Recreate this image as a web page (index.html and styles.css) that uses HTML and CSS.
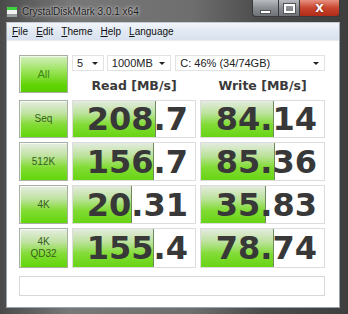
FILE: index.html
```html
<!DOCTYPE html>
<html lang="en">
<head>
  <meta charset="UTF-8">
  <title>CrystalDiskMark 3.0.1 x64</title>
  <link rel="stylesheet" href="styles.css">
</head>
<body>
  <div class="window">
    <div class="titlebar">
      <svg class="app-icon" width="14" height="14" viewBox="0 0 14 14">
        <rect x="1" y="1" width="12" height="4" fill="#3fd23f"/>
        <rect x="1" y="5" width="12" height="4" fill="#f2f2f2"/>
        <rect x="1" y="9" width="12" height="4" fill="#9aa0a0"/>
        <rect x="1.5" y="1.5" width="11" height="11" fill="none" stroke="#555" stroke-width="1"/>
      </svg>
      <span class="title">CrystalDiskMark 3.0.1 x64</span>
      <div class="controls">
        <div class="ctl ctl-min"><span class="min-glyph"></span></div>
        <div class="ctl ctl-max"><span class="max-glyph"></span></div>
        <div class="ctl ctl-close">X</div>
      </div>
    </div>

    <div class="frame">
      <div class="menubar">
        <span class="menu-item"><u>F</u>ile</span>
        <span class="menu-item"><u>E</u>dit</span>
        <span class="menu-item"><u>T</u>heme</span>
        <span class="menu-item"><u>H</u>elp</span>
        <span class="menu-item"><u>L</u>anguage</span>
      </div>

      <div class="client">
        <div class="grid">
          <div class="btn btn-all">All</div>

          <div class="combos">
            <div class="combo combo-count">5<span class="arrow"></span></div>
            <div class="combo combo-size">1000MB<span class="arrow"></span></div>
            <div class="combo combo-drive">C: 46% (34/74GB)<span class="arrow"></span></div>
          </div>

          <div class="head">Read [MB/s]</div>
          <div class="head">Write [MB/s]</div>

          <div class="btn btn-row">Seq</div>
          <div class="cell"><div class="bar" style="width: 82px"></div><span class="val">208.7</span></div>
          <div class="cell"><div class="bar" style="width: 72px"></div><span class="val">84.14</span></div>

          <div class="btn btn-row">512K</div>
          <div class="cell"><div class="bar" style="width: 80px"></div><span class="val">156.7</span></div>
          <div class="cell"><div class="bar" style="width: 73px"></div><span class="val">85.36</span></div>

          <div class="btn btn-row">4K</div>
          <div class="cell"><div class="bar" style="width: 58px"></div><span class="val">20.31</span></div>
          <div class="cell"><div class="bar" style="width: 64px"></div><span class="val">35.83</span></div>

          <div class="btn btn-row btn-two">4K<br>QD32</div>
          <div class="cell"><div class="bar" style="width: 80px"></div><span class="val">155.4</span></div>
          <div class="cell"><div class="bar" style="width: 72px"></div><span class="val">78.74</span></div>

          <div class="comment"></div>
        </div>
      </div>
    </div>
  </div>
</body>
</html>
```

FILE: styles.css
```css
body {
  margin: 0;
  width: 348px;
  height: 314px;
  overflow: hidden;
  background: #3a3a3a;
}

.window {
  width: 348px;
  height: 314px;
  display: flex;
  flex-direction: column;
  background: linear-gradient(90deg, #4a4a4a 0%, #787878 20%, #6e6e6e 55%, #4c4c4c 75%, #3e3e3e 100%);
  box-sizing: border-box;
}

/* title bar */
.titlebar {
  height: 22px;
  display: flex;
  align-items: center;
  padding-left: 5px;
  position: relative;
}

.app-icon {
  display: block;
  margin-top: 1px;
}

.title {
  margin-left: 3px;
  font-family: "Liberation Sans", Arial, sans-serif;
  font-size: 10px;
  color: #1a1a1a;
  text-shadow: 0 0 4px rgba(230, 230, 230, 0.9), 0 0 2px rgba(230, 230, 230, 0.8);
}

.controls {
  position: absolute;
  top: 0;
  right: 8px;
  display: flex;
  height: 17px;
}

.ctl {
  height: 16px;
  border: 1px solid #3a3a3a;
  border-top: none;
  display: flex;
  align-items: center;
  justify-content: center;
  box-sizing: content-box;
}

.ctl-min {
  width: 25px;
  border-radius: 0 0 0 4px;
  background: linear-gradient(#b8bcc0, #8a8e92 50%, #6e7276);
  border-right: none;
}

.ctl-max {
  width: 20px;
  background: linear-gradient(#b8bcc0, #8a8e92 50%, #6e7276);
}

.ctl-close {
  width: 39px;
  border-left: none;
  border-radius: 0 0 4px 0;
  background: linear-gradient(#e89080, #c8442e 50%, #b02c18);
  font-family: "DejaVu Sans", sans-serif;
  font-weight: bold;
  font-size: 11px;
  color: #fff;
  text-shadow: 0 0 2px #6a1a0a;
}

.min-glyph {
  width: 9px;
  height: 2px;
  margin-top: 7px;
  background: #fff;
  border: 1px solid #555;
}

.max-glyph {
  width: 7px;
  height: 5px;
  border: 2px solid #fff;
  outline: 1px solid #555;
}

/* frame and menu */
.frame {
  flex: 1;
  display: flex;
  flex-direction: column;
  margin: 0 8px 6px 6px;
  border: 1px solid #9aa2aa;
  border-top-color: #c8ccd0;
}

.menubar {
  height: 17px;
  display: flex;
  align-items: center;
  padding-left: 5px;
  gap: 8px;
  background: linear-gradient(#f2f6fb, #e2e9f3 50%, #d8e1ee);
  border-bottom: 1px solid #e8ecf0;
  font-family: "Liberation Sans", Arial, sans-serif;
  font-size: 10px;
  color: #111;
}

.client {
  flex: 1;
  background: #fff;
  padding: 14px 0 0 12px;
}

.grid {
  display: grid;
  grid-template-columns: 49px 124px 125px;
  grid-template-rows: 16px 21px 38px 39px 39px 40px 24px;
  column-gap: 4px;
  row-gap: 4px;
}

/* buttons */
.btn {
  border: 1px solid #a8b0a4;
  box-sizing: border-box;
  display: flex;
  align-items: center;
  justify-content: center;
  text-align: center;
  font-family: "Liberation Sans", Arial, sans-serif;
  font-size: 10px;
  line-height: 12px;
  color: #355e1c;
  box-shadow: inset 1px 1px 0 rgba(255, 255, 255, 0.7);
}

.btn-all {
  grid-row: 1 / 3;
  height: 38px;
  background: linear-gradient(#d4f0c0, #96e252 45%, #62d406 80%, #58cc00);
  color: #3c8a12;
  font-size: 11px;
}

.btn-row {
  grid-column: 1;
  background: linear-gradient(#e6ede2, #bfe2a0 35%, #84dc36 65%, #62d60a);
}

.btn-two {
  line-height: 12px;
}

/* combos */
.combos {
  grid-column: 2 / 4;
  display: flex;
  gap: 3px;
}

.combo {
  height: 16px;
  box-sizing: border-box;
  border: 1px solid #e2e2e2;
  background: #fff;
  display: flex;
  align-items: center;
  justify-content: space-between;
  padding: 0 5px 0 4px;
  font-family: "Liberation Sans", Arial, sans-serif;
  font-size: 11px;
  color: #222;
}

.combo-count {
  width: 32px;
}

.combo-size {
  width: 65px;
}

.combo-drive {
  width: 151px;
  margin-left: 1px;
}

.arrow {
  width: 0;
  height: 0;
  border-left: 3px solid transparent;
  border-right: 3px solid transparent;
  border-top: 3px solid #222;
}

.head {
  text-align: center;
  font-family: "DejaVu Sans", Verdana, sans-serif;
  font-weight: bold;
  font-size: 12.5px;
  line-height: 21px;
  color: #3a3a3a;
}

/* result cells */
.cell {
  position: relative;
  border: 1px solid #dcdcdc;
  background: #fff;
  display: flex;
  align-items: center;
  justify-content: flex-end;
  padding-right: 7px;
}

.bar {
  position: absolute;
  left: 0;
  top: 0;
  bottom: 0;
  background: linear-gradient(#e4ebe0, #bbe29a 35%, #82dc36 65%, #68d414);
  border-right: 1px solid #6f8a5a;
}

.val {
  position: relative;
  font-family: "DejaVu Sans", Verdana, sans-serif;
  font-weight: bold;
  font-size: 32px;
  line-height: 36px;
  color: #383838;
}

.comment {
  grid-column: 1 / 4;
  margin-top: 4px;
  border: 1px solid #d8d8d8;
  background: #fff;
}
```
